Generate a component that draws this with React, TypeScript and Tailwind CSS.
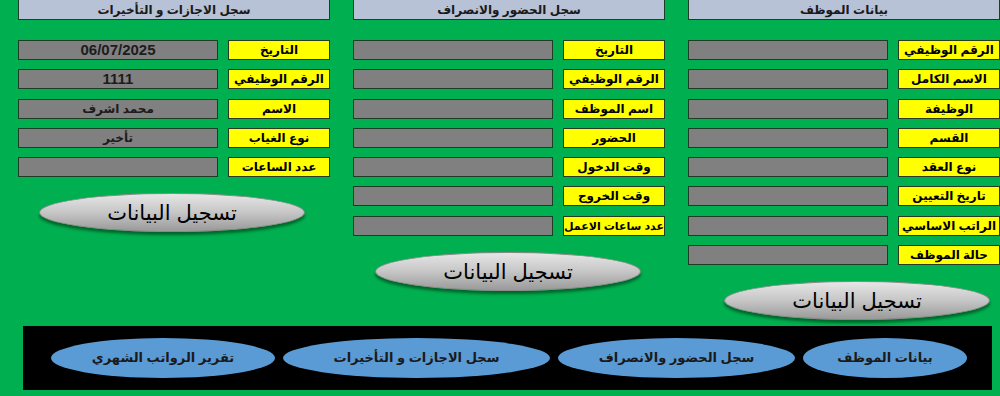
import React from 'react';

type Row = { label: string; value?: string; big?: boolean; tight?: boolean };

const employeeRows: Row[] = [
    { label: 'الرقم الوظيفي' },
    { label: 'الاسم الكامل' },
    { label: 'الوظيفة' },
    { label: 'القسم' },
    { label: 'نوع العقد' },
    { label: 'تاريخ التعيين' },
    { label: 'الراتب الاساسي' },
    { label: 'حالة الموظف' },
];

const attendanceRows: Row[] = [
    { label: 'التاريخ' },
    { label: 'الرقم الوظيفي' },
    { label: 'اسم الموظف' },
    { label: 'الحضور' },
    { label: 'وقت الدخول' },
    { label: 'وقت الخروج' },
    { label: 'عدد ساعات الاعمل', tight: true },
];

const leaveRows: Row[] = [
    { label: 'التاريخ', value: '06/07/2025', big: true },
    { label: 'الرقم الوظيفي', value: '1111', big: true },
    { label: 'الاسم', value: 'محمد اشرف' },
    { label: 'نوع الغياب', value: 'تأخير' },
    { label: 'عدد الساعات' },
];

const navItems = [
    { label: 'بيانات الموظف', w: 'w-[164px]' },
    { label: 'سجل الحضور والانصراف', w: 'w-[237px]' },
    { label: 'سجل الاجازات و التأخيرات', w: 'w-[267px]' },
    { label: 'تقرير الرواتب الشهري', w: 'w-[224px]' },
];

// yellow label + grey field, right to left
const FieldRow = ({ row }: { row: Row }) => (
    <div className="flex h-5 items-stretch gap-[10px]">
        <div
            className={`flex w-[102px] shrink-0 items-center justify-center whitespace-nowrap border border-[#2b3a1f] bg-[#ffff00] font-bold text-black ${
                row.tight ? 'text-[11px] tracking-tight' : 'text-[12px]'
            }`}
        >
            {row.label}
        </div>
        <div
            className={`flex w-[200px] shrink-0 items-center justify-center border border-[#1f3d26] bg-[#808080] font-bold text-[#1c1c1c] ${
                row.big ? 'text-[15px]' : 'text-[12px]'
            }`}
        >
            {row.value ?? ''}
        </div>
    </div>
);

const SaveButton = ({ className }: { className: string }) => (
    <button
        className={`flex h-[39px] w-[266px] items-center justify-center rounded-[50%] border border-[#8a8a8a] bg-gradient-to-b from-[#e6e6e6] via-[#c6c6c6] to-[#9a9a9a] text-[21px] text-black shadow-[0_3px_3px_rgba(0,40,10,0.55)] ${className}`}
    >
        تسجيل البيانات
    </button>
);

const Panel = ({
    title,
    rows,
    buttonClass,
    width,
}: {
    title: string;
    rows: Row[];
    buttonClass: string;
    width: string;
}) => (
    <div className={`flex shrink-0 flex-col ${width}`}>
        <div className="flex h-5 items-center justify-center border-x border-b border-[#1f3d2a] bg-[#b7c2d6] text-[12px] font-bold text-[#1a1a1a]">
            {title}
        </div>
        <div className="mt-5 flex flex-col gap-[9.3px]">
            {rows.map((r, i) => (
                <FieldRow key={i} row={r} />
            ))}
        </div>
        <SaveButton className={buttonClass} />
    </div>
);

export default function App() {
    return (
        <div
            dir="rtl"
            className="h-[396px] w-[1000px] overflow-hidden bg-[#00b050]"
            style={{ fontFamily: '"Liberation Sans", "DejaVu Sans", sans-serif' }}
        >
            <div className="flex h-[326px] items-start gap-[23px] -ml-[40px]">
                <Panel
                    title="بيانات الموظف"
                    rows={employeeRows}
                    width="w-[312px]"
                    buttonClass="mt-4 ml-[-12px] mr-[10px]"
                />
                <Panel
                    title="سجل الحضور والانصراف"
                    rows={attendanceRows}
                    width="w-[312px]"
                    buttonClass="mt-4 mr-[24px]"
                />
                <Panel
                    title="سجل الاجازات و التأخيرات"
                    rows={leaveRows}
                    width="w-[312px]"
                    buttonClass="mt-4 mr-[25px]"
                />
            </div>
            <div className="ml-[23px] mr-[8px] flex h-16 items-center gap-2 bg-black pr-[25px]">
                {navItems.map((n, i) => (
                    <button
                        key={i}
                        className={`flex h-10 shrink-0 items-center justify-center rounded-[50%] bg-[#5b9bd5] text-[13px] font-bold text-[#1a1a1a] ${n.w}`}
                    >
                        {n.label}
                    </button>
                ))}
            </div>
        </div>
    );
}
